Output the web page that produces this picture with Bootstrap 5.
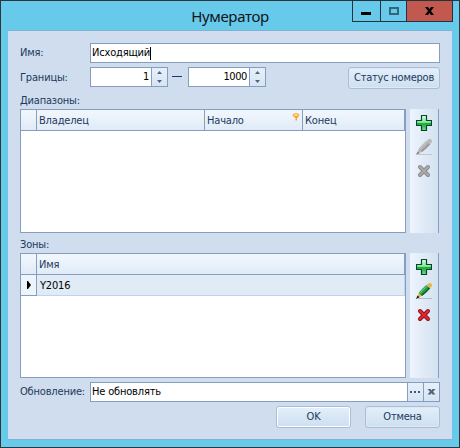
<!DOCTYPE html>
<html lang="ru">
<head>
<meta charset="utf-8">
<title>Нумератор</title>
<link href="https://cdn.jsdelivr.net/npm/bootstrap@5.3.0/dist/css/bootstrap.min.css" rel="stylesheet">
<style>
body{width:460px;height:448px;overflow:hidden;font-family:"DejaVu Sans Condensed","DejaVu Sans",sans-serif;font-stretch:condensed;font-size:11px;line-height:14px;letter-spacing:-.18px;color:#1e395b;background:#67caeb}
.win{width:460px;height:448px;border:1px solid #2f353b;background:#67caeb;padding:0 7px 7px}
.titlebar{height:29px}
.caption{font:15px/20px "Noto Sans",sans-serif;font-stretch:normal;letter-spacing:-.35px;color:#101418;padding-top:5px;width:444px;text-align:center}
.winbtns{top:0;right:6px;height:22px;border:1px solid #23323c;margin-top:-1px}
.winbtns span{height:20px;border-right:1px solid #23323c}
.winbtns span:last-child{border-right:0;background:#c2594f}
.b1{width:28px}.b2{width:26px}.b3{width:45px}
.pane{width:444px;height:410px;background:#cfddee;border-top:1px solid #82b3cc;border-bottom:1px solid #82b3cc;padding:12px 12px 0}
.lbl{width:70px;flex:none;white-space:nowrap}
.box{border:1px solid #859ebf;background:#fff;height:20px;color:#000}
.spin{width:78px}
.spin .val{flex:1;text-align:right;padding-right:2px;letter-spacing:-.4px}
.side{border-left:1px solid #859ebf;background:linear-gradient(#e6f0fa,#d6e4f3);height:18px}
.b{height:22px;border:1px solid #abbcd7;border-radius:3px;background:linear-gradient(#e3effb,#cddff0);color:#1e395b;padding:0;font-size:11px;line-height:20px;box-shadow:inset 0 0 0 1px #dde9f6;letter-spacing:-.22px;white-space:nowrap}
.b.main{box-shadow:inset 0 0 0 1px #fff}
.grid{width:386px;border:1px solid #859ebf;background:#fff}
.hd{height:21px;border-bottom:1px solid #859ebf;background:linear-gradient(#f2f7fd,#e0ebf8);border-right:1px solid #859ebf}
.hd>div{border-right:1px solid #859ebf;padding:4px 0 0 2px;height:20px}
.hd>div:last-child{border-right:0}
.tools{width:29px;border-right:1px solid #859ebf;background:linear-gradient(90deg,#edf4fd,#d3e1f0);margin-left:4px;padding-top:6px}
.tools svg{display:block;margin:0 0 8px 6px}
.rowline{height:21px;background:#e1ebf6;border-bottom:1px solid #bdd3ef;border-right:1px solid #bdd3ef;color:#000}
.ind{width:16px;background:#edf4fc;border-right:1px solid #859ebf;border-bottom:1px solid #859ebf;height:21px}
svg{display:block}
.pen-off{--s:#c3c8d0;--t:#b9b9b9;--p:#888;--b:#b0b0b0;--d:#999;--l:#d0d0d0}
.pen-on{--s:#b4bcc6;--t:#e8b44c;--p:#1b1b10;--b:#26a24a;--d:#08682b;--l:#6cd080}
.x-off{--e:#8b8b8b;--f:#a9a9a9}
.x-on{--e:#930c17;--f:#dc2a30}
</style>
<script src="https://cdn.jsdelivr.net/npm/bootstrap@5.3.0/dist/js/bootstrap.bundle.min.js"></script>
</head>
<body>
<svg width="0" height="0" class="position-absolute"><defs>
<linearGradient id="g" x2="0" y2="1"><stop stop-color="#d4ffd9"/><stop offset=".5" stop-color="#7be38b"/><stop offset=".51" stop-color="#13a83b"/><stop offset="1" stop-color="#6ddc7e"/></linearGradient>
<symbol id="plus" viewBox="0 0 16 16"><path d="M5.500.5h5v5h5v5h-5v5h-5v-5h-5v-5h5z" fill="url(#g)" stroke="#07452f" stroke-width="1.200" stroke-linejoin="round"/></symbol>
<symbol id="cross" viewBox="0 0 16 16"><path d="M4 4l8 8M12 4l-8 8" stroke="var(--e)" stroke-width="4" stroke-linecap="round"/><path d="M4 4l8 8M12 4l-8 8" stroke="var(--f)" stroke-width="2.200" stroke-linecap="round"/></symbol>
<symbol id="pen" viewBox="0 0 16 16"><path d="M2 15.500h14" stroke="var(--s)"/><path d="M.3 15.800L3 9.500 6.500 12.500z" fill="var(--t)"/><path d="M0 16l1.600-3.500 2 1.700z" fill="var(--p)"/><path d="M2.800 9.800Q6 5.500 10.300 1.900L14.200 5.300Q10.500 9.800 6.300 12.800 4 12 2.800 9.800z" fill="var(--b)"/><path d="M4.800 12Q9.500 8.500 12.800 4.200L14.200 5.300Q10.500 9.800 6.300 12.800z" fill="var(--d)"/><path d="M4.200 10Q7 6.400 10.500 3.500" stroke="var(--l)" fill="none"/><path d="M10.300 1.900Q13-.5 15 .3 16.400 1.500 15.700 3.200L14.200 5.300z" fill="var(--t)"/></symbol>
</defs></svg>
<div class="win position-relative">
  <div class="titlebar">
    <div class="caption">Нумератор</div>
    <div class="winbtns position-absolute d-flex">
      <span class="b1"><svg width="27" height="20"><path d="M8 11h10v3H8z"/></svg></span>
      <span class="b2"><svg width="25" height="20"><path d="M9 7h8v6H9z" fill="none" stroke="#32677b" stroke-width="2"/></svg></span>
      <span class="b3"><svg width="45" height="20"><path d="M18 6h3l1.500 2L24 6h3l-3 4 3 4h-3l-1.500-2L21 14h-3l3-4z"/></svg></span>
    </div>
  </div>
  <div class="pane">
    <div class="d-flex align-items-center"><div class="lbl">Имя:</div><div class="box flex-grow-1 d-flex align-items-center"><span style="padding-left:1px">Исходящий</span><svg width="1" height="13"><path d="M0 0h1v13H0z"/></svg></div></div>
    <div class="d-flex align-items-start" style="margin-top:4px">
      <div class="lbl" style="padding-top:4px">Границы:</div>
      <div class="box spin d-flex align-items-center"><span class="val">1</span><span class="side"><svg width="15" height="18"><path d="M5 6h5L7.500 3zM5 12h5l-2.500 3z" fill="#52637e"/></svg></span></div>
      <svg width="20" height="20"><path d="M4 9h10v1H4z" fill="#1e395b"/></svg>
      <div class="box spin d-flex align-items-center"><span class="val">1000</span><span class="side"><svg width="15" height="18"><path d="M5 6h5L7.500 3zM5 12h5l-2.500 3z" fill="#52637e"/></svg></span></div>
      <button class="b ms-auto" style="width:92px">Статус номеров</button>
    </div>
    <div style="height:20px;padding-top:5px">Диапазоны:</div>
    <div class="d-flex" style="height:124px">
      <div class="grid"><div class="hd d-flex"><div style="width:16px"></div><div style="width:168px">Владелец</div><div class="d-flex justify-content-between" style="width:98px">Начало<svg width="8" height="8" style="margin:-1px 2px 0 0"><ellipse cx="4" cy="2" rx="3.200" ry="1.300" fill="#ffe7a8" stroke="#f7a52b"/><path d="M1 3h6L5 5v2.500H3.500V5z" fill="#f7a52b"/></svg></div><div>Конец</div></div></div>
      <div class="tools"><svg width="16" height="16"><use href="#plus"/></svg><svg class="pen-off" width="16" height="16"><use href="#pen"/></svg><svg class="x-off" width="16" height="16"><use href="#cross"/></svg></div>
    </div>
    <div style="height:20px;padding-top:5px">Зоны:</div>
    <div class="d-flex" style="height:125px">
      <div class="grid"><div class="hd d-flex"><div style="width:16px"></div><div>Имя</div></div>
        <div class="rowline d-flex"><div class="ind"><svg width="15" height="20"><path d="M6 6h1l3 4-3 4H6z"/></svg></div><div style="padding:4px 0 0 3px">Y2016</div></div></div>
      <div class="tools"><svg width="16" height="16"><use href="#plus"/></svg><svg class="pen-on" width="16" height="16"><use href="#pen"/></svg><svg class="x-on" width="16" height="16"><use href="#cross"/></svg></div>
    </div>
    <div class="d-flex align-items-center" style="margin-top:4px"><div class="lbl">Обновление:</div><div class="box flex-grow-1 d-flex align-items-center"><span class="flex-grow-1" style="padding-left:1px">Не обновлять</span><span class="side"><svg width="15" height="18"><path d="M2 8h2v2H2zM6 8h2v2H6zM10 8h2v2h-2z" fill="#44566f"/></svg></span><span class="side"><svg width="15" height="18"><path d="M3.500 6h3l1 1.500L8.500 6h3L9 8.700l2.500 2.800h-3l-1-1.500-1 1.500h-3L6 8.700z" fill="#52617a"/></svg></span></div></div>
    <div class="d-flex justify-content-end" style="margin-top:4px;gap:14px"><button class="b main" style="width:75px">OK</button><button class="b" style="width:75px">Отмена</button></div>
  </div>
</div>
</body>
</html>
